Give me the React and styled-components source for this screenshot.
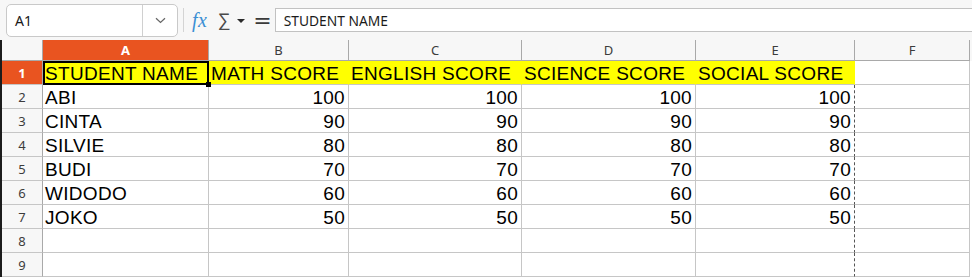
import styled, { createGlobalStyle } from "styled-components";

const GlobalStyle = createGlobalStyle`
  html, body {
    margin: 0;
    padding: 0;
    background: #ffffff;
    width: 972px;
    height: 277px;
    overflow: hidden;
  }
`;

const columns = [
  { key: "A", width: 166 },
  { key: "B", width: 140 },
  { key: "C", width: 173 },
  { key: "D", width: 174 },
  { key: "E", width: 159 },
  { key: "F", width: 115 },
];

const headers = ["STUDENT NAME", "MATH SCORE", "ENGLISH SCORE", "SCIENCE SCORE", "SOCIAL SCORE"];

const students = [
  ["ABI", 100],
  ["CINTA", 90],
  ["SILVIE", 80],
  ["BUDI", 70],
  ["WIDODO", 60],
  ["JOKO", 50],
];

const App = () => {
  return (
    <Window>
      <GlobalStyle />
      <Toolbar>
        <NameBox>
          <NameValue>A1</NameValue>
          <NameDrop>
            <svg width="11" height="7" viewBox="0 0 11 7">
              <path d="M1 1.2 L5.5 5.5 L10 1.2" fill="none" stroke="#666" strokeWidth="1.2" />
            </svg>
          </NameDrop>
        </NameBox>
        <Separator />
        <FxIcon>fx</FxIcon>
        <Sigma>∑</Sigma>
        <Caret />
        <Equals>=</Equals>
        <FormulaInput>STUDENT NAME</FormulaInput>
      </Toolbar>

      <Sheet>
        <HeaderRow>
          <Corner />
          {columns.map((c) => (
            <ColHeader key={c.key} $w={c.width} $active={c.key === "A"}>
              {c.key}
            </ColHeader>
          ))}
        </HeaderRow>

        <Row>
          <RowHeader $active>1</RowHeader>
          {headers.map((h, i) => (
            <Cell key={h} $w={columns[i].width} $fill="#ffff00" $selected={i === 0}>
              {h}
              {i === 0 && <Handle />}
            </Cell>
          ))}
          <Cell $w={columns[5].width} />
        </Row>

        {students.map(([name, score], r) => (
          <Row key={name}>
            <RowHeader>{r + 2}</RowHeader>
            <Cell $w={columns[0].width}>{name}</Cell>
            {[1, 2, 3, 4].map((ci) => (
              <Cell key={ci} $w={columns[ci].width} $right $pageBreak={ci === 4}>
                {score}
              </Cell>
            ))}
            <Cell $w={columns[5].width} />
          </Row>
        ))}

        {[8, 9].map((n) => (
          <Row key={n}>
            <RowHeader>{n}</RowHeader>
            {columns.map((c) => (
              <Cell key={c.key} $w={c.width} $pageBreak={c.key === "E"} />
            ))}
          </Row>
        ))}
      </Sheet>
    </Window>
  );
};

export default App;

const Window = styled.div`
  width: 972px;
  height: 277px;
  display: flex;
  flex-direction: column;
  background: #f7f7f7;
  font-family: "Liberation Sans", Arial, sans-serif;
`;

const Toolbar = styled.div`
  height: 40px;
  display: flex;
  align-items: center;
  padding-left: 6px;
  box-sizing: border-box;
  background: #f7f7f7;
`;

const NameBox = styled.div`
  width: 172px;
  height: 33px;
  box-sizing: border-box;
  display: flex;
  background: #ffffff;
  border: 1px solid #c9c9c9;
  border-radius: 5px;
  margin-top: 1px;
`;

const NameValue = styled.div`
  flex: 1;
  display: flex;
  align-items: center;
  padding-left: 8px;
  font-family: "Noto Sans", "Open Sans", sans-serif;
  font-size: 14px;
  color: #1a1a1a;
  border-right: 1px solid #d0d0d0;
`;

const NameDrop = styled.div`
  width: 34px;
  display: flex;
  align-items: center;
  justify-content: center;
`;

const Separator = styled.div`
  width: 1px;
  height: 24px;
  background: #d4d4d4;
  margin: 0 8px 0 5px;
`;

const FxIcon = styled.span`
  font-family: "Liberation Serif", "DejaVu Serif", serif;
  font-style: italic;
  font-size: 20px;
  color: #3b8fd4;
  margin-right: 10px;
  letter-spacing: 0.5px;
`;

const Sigma = styled.span`
  font-family: "DejaVu Sans", sans-serif;
  font-size: 18px;
  font-weight: 300;
  color: #4a4a4a;
  margin-right: 7px;
`;

const Caret = styled.span`
  width: 0;
  height: 0;
  border-left: 4px solid transparent;
  border-right: 4px solid transparent;
  border-top: 4px solid #2b2b2b;
  margin-right: 8px;
  margin-top: 2px;
`;

const Equals = styled.span`
  font-family: "DejaVu Sans", sans-serif;
  font-size: 22px;
  color: #3a3a3a;
  margin-right: 3px;
`;

const FormulaInput = styled.div`
  flex: 1;
  height: 24px;
  box-sizing: border-box;
  margin-right: -6px;
  display: flex;
  align-items: center;
  padding-left: 8px;
  background: #ffffff;
  border: 1px solid #c2c2c2;
  border-right: none;
  font-family: "Noto Sans", "Open Sans", sans-serif;
  font-size: 13.8px;
  color: #1a1a1a;
`;

const Sheet = styled.div`
  flex: 1;
  display: flex;
  flex-direction: column;
  border-left: 2px solid #1c1c1c;
  background: #ffffff;
`;

const HeaderRow = styled.div`
  display: flex;
  height: 21px;
  background: #f7f7f7;
`;

const headerText = `
  font-family: "Noto Sans", "Open Sans", sans-serif;
  font-size: 13px;
  box-sizing: border-box;
  display: flex;
  align-items: center;
  justify-content: center;
`;

const Corner = styled.div`
  width: 41px;
  box-sizing: border-box;
  border-right: 1px solid #a9a9a9;
  border-bottom: 1px solid #a9a9a9;
`;

const ColHeader = styled.div`
  ${headerText}
  width: ${({ $w }) => $w}px;
  border-right: 1px solid #a9a9a9;
  border-bottom: 1px solid #a9a9a9;
  background: ${({ $active }) => ($active ? "#e95420" : "#f7f7f7")};
  color: ${({ $active }) => ($active ? "#ffffff" : "#3c3c3c")};
  font-weight: ${({ $active }) => ($active ? "bold" : "normal")};
`;

const Row = styled.div`
  display: flex;
  height: 24px;
`;

const RowHeader = styled.div`
  ${headerText}
  width: 41px;
  border-right: 1px solid #a9a9a9;
  border-bottom: 1px solid #c6c6c6;
  background: ${({ $active }) => ($active ? "#e95420" : "#f7f7f7")};
  color: ${({ $active }) => ($active ? "#ffffff" : "#3c3c3c")};
  font-weight: ${({ $active }) => ($active ? "bold" : "normal")};
`;

const Cell = styled.div`
  position: relative;
  width: ${({ $w }) => $w}px;
  box-sizing: border-box;
  display: flex;
  align-items: flex-end;
  justify-content: ${({ $right }) => ($right ? "flex-end" : "flex-start")};
  padding: 0 3px 0 2px;
  font-size: 19px;
  letter-spacing: 0.3px;
  line-height: 21px;
  color: #000000;
  white-space: nowrap;
  background: ${({ $fill }) => $fill || "transparent"};
  border-bottom: 1px solid #c6c6c6;
  border-right: ${({ $fill, $pageBreak }) =>
    $pageBreak ? "1px dashed #555555" : $fill ? `1px solid ${$fill}` : "1px solid #c6c6c6"};
  ${({ $selected }) =>
    $selected &&
    `
    outline: 2px solid #000000;
    outline-offset: -2px;
  `}
`;

const Handle = styled.span`
  position: absolute;
  right: -3px;
  bottom: -3px;
  width: 5px;
  height: 5px;
  background: #000000;
  z-index: 2;
`;
